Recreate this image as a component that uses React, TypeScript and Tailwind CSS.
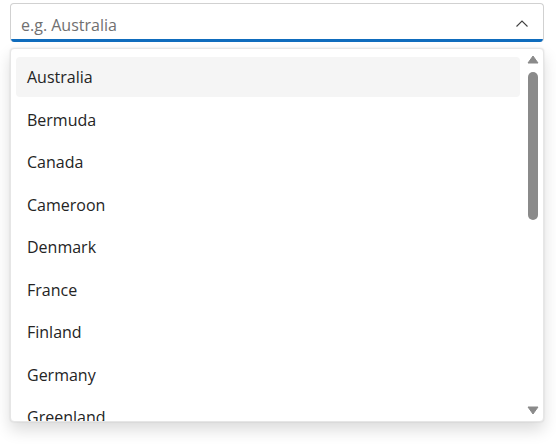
import React from 'react'

const countries = [
  'Australia',
  'Bermuda',
  'Canada',
  'Cameroon',
  'Denmark',
  'France',
  'Finland',
  'Germany',
  'Greenland',
]

function App() {
  return (
    <div
      className="w-[556px] h-[447px] bg-white pt-[3px] pl-[10px] pr-[12px] text-[#242424]"
      style={{ fontFamily: '"Open Sans", "Noto Sans", sans-serif' }}
    >
      {/* Combobox input */}
      <div className="relative h-[39px] rounded-[4px] border border-[#d1d1d1] border-b-0 bg-white flex items-center pt-[3px] pl-[10px] pr-[14px] overflow-hidden">
        <span className="flex-1 text-[16px] text-[#707070]">e.g. Australia</span>
        <svg width="14" height="14" viewBox="0 0 14 14" fill="none" className="text-[#424242] -mt-[2px]">
          <path d="M1.5 9.5 L7 4 L12.5 9.5" stroke="currentColor" strokeWidth="1.1" />
        </svg>
        <div className="absolute left-0 right-0 bottom-0 h-[3px] bg-[#0f6cbd]" />
      </div>

      {/* Listbox */}
      <div className="mt-[6px] h-[374px] rounded-[4px] border border-[#e6e6e6] bg-white shadow-[0_8px_16px_rgba(0,0,0,0.14),0_0_2px_rgba(0,0,0,0.12)] flex overflow-hidden">
        <div className="flex-1 pt-[8px] pl-[5px] pr-[5px] overflow-hidden">
          {countries.map((c, i) => (
            <div
              key={c}
              className={
                'h-[40px] mb-[2.5px] rounded-[4px] pl-[11px] flex items-center text-[16px] ' +
                (i === 0 ? 'bg-[#f5f5f5]' : '')
              }
            >
              {c}
            </div>
          ))}
        </div>
        {/* Scrollbar */}
        <div className="w-[16px] flex flex-col items-center pt-[6px] pb-[6px] mr-[2px]">
          <svg width="12" height="9" viewBox="0 0 12 9">
            <path d="M6 1 L11 8 L1 8 Z" fill="#8a8a8a" stroke="#8a8a8a" strokeLinejoin="round" />
          </svg>
          <div className="mt-[8px] w-[10px] h-[148px] rounded-full bg-[#8a8a8a]" />
          <div className="flex-1" />
          <svg width="12" height="9" viewBox="0 0 12 9">
            <path d="M1 1 L11 1 L6 8 Z" fill="#8a8a8a" stroke="#8a8a8a" strokeLinejoin="round" />
          </svg>
        </div>
      </div>
    </div>
  )
}

export default App
